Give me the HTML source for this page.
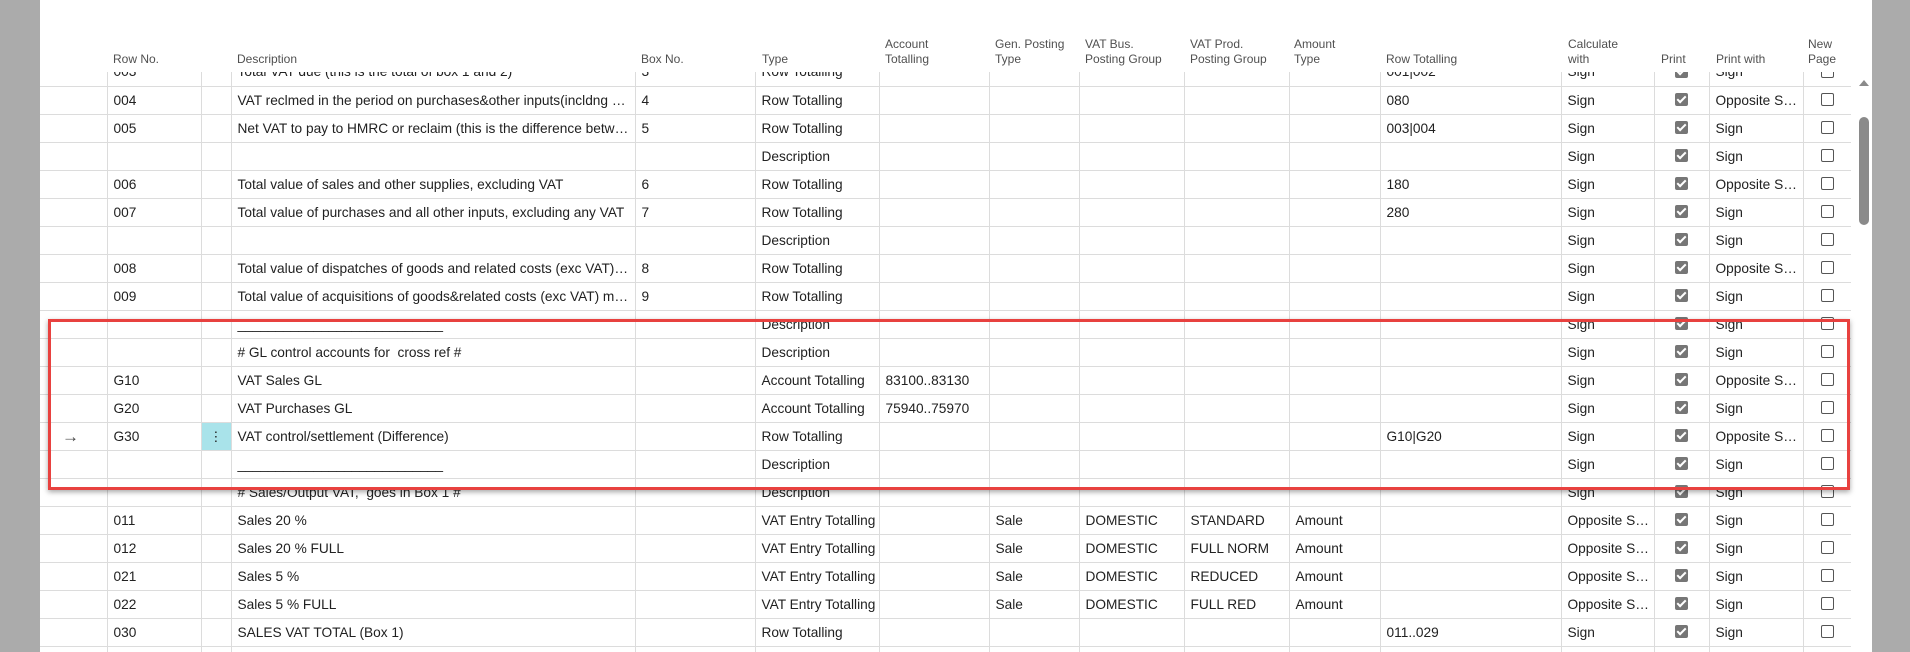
<!DOCTYPE html>
<html><head><meta charset="utf-8"><style>
*{margin:0;padding:0;box-sizing:border-box}
body{width:1910px;height:652px;overflow:hidden;background:#fff;font-family:"Liberation Sans",sans-serif;position:relative}
.gl{position:absolute;left:0;top:0;width:40px;height:652px;background:#ababab}
.gr{position:absolute;left:1872px;top:0;width:38px;height:652px;background:#ababab}
.hdr{position:absolute;top:1px;left:40px;height:72px;width:1832px;font-size:12px;color:#505050;line-height:15px}
.hdr div{position:absolute;white-space:nowrap}
.body{position:absolute;top:72px;left:40px;width:1811px;height:580px;overflow:hidden}
table{border-collapse:collapse;table-layout:fixed;width:1811px;margin-top:-14px;font-size:13.7px;color:#212121}
td{height:28px;border-bottom:1px solid #dcdcdc;border-left:1px solid #dcdcdc;padding:0 3px 0 6px;white-space:nowrap;overflow:hidden;text-overflow:ellipsis;line-height:27px}
td:first-child{border-left:none}
.ck{display:inline-block;width:13px;height:13px;border-radius:2px;background:#767676;vertical-align:middle;position:relative;top:-1px}
.ck:after{content:"";position:absolute;left:4px;top:1px;width:3px;height:7px;border:solid #fff;border-width:0 2px 2px 0;transform:rotate(45deg)}
.un{display:inline-block;width:13px;height:13px;border-radius:2px;border:1px solid #555;vertical-align:middle;position:relative;top:-1px}
.c{text-align:center;padding:0}
.red{position:absolute;left:48px;top:319px;width:1802px;height:171px;border:3px solid #e8413f;box-shadow:0 2px 5px rgba(0,0,0,.35)}
.sb{position:absolute;left:1859px;top:117px;width:10px;height:108px;border-radius:5px;background:#8a8a8a}
.up{position:absolute;left:1859px;top:80px;width:0;height:0;border-left:5px solid transparent;border-right:5px solid transparent;border-bottom:6px solid #8a8a8a}
</style></head><body>
<div class="gl"></div><div class="gr"></div>
<div class="hdr">
<div style="left:73px;top:51px">Row No.</div>
<div style="left:197px;top:51px">Description</div>
<div style="left:601px;top:51px">Box No.</div>
<div style="left:722px;top:51px">Type</div>
<div style="left:845px;top:36px">Account<br>Totalling</div>
<div style="left:955px;top:36px">Gen. Posting<br>Type</div>
<div style="left:1045px;top:36px">VAT Bus.<br>Posting Group</div>
<div style="left:1150px;top:36px">VAT Prod.<br>Posting Group</div>
<div style="left:1254px;top:36px">Amount<br>Type</div>
<div style="left:1346px;top:51px">Row Totalling</div>
<div style="left:1528px;top:36px">Calculate<br>with</div>
<div style="left:1621px;top:51px">Print</div>
<div style="left:1676px;top:51px">Print with</div>
<div style="left:1768px;top:36px">New<br>Page</div>
</div>
<div class="body"><table>
<colgroup><col style="width:67px"><col style="width:94px"><col style="width:30px"><col style="width:404px"><col style="width:120px"><col style="width:124px"><col style="width:110px"><col style="width:90px"><col style="width:105px"><col style="width:105px"><col style="width:91px"><col style="width:181px"><col style="width:93px"><col style="width:55px"><col style="width:94px"><col style="width:48px"></colgroup>
<tr><td></td><td>003</td><td></td><td>Total VAT due (this is the total of box 1 and 2)</td><td>3</td><td>Row Totalling</td><td></td><td></td><td></td><td></td><td></td><td>001|002</td><td>Sign</td><td class="c"><span class="ck"></span></td><td>Sign</td><td class="c"><span class="un"></span></td></tr>
<tr><td></td><td>004</td><td></td><td>VAT reclmed in the period on purchases&amp;other inputs(incldng acquisitions)</td><td>4</td><td>Row Totalling</td><td></td><td></td><td></td><td></td><td></td><td>080</td><td>Sign</td><td class="c"><span class="ck"></span></td><td>Opposite Sign</td><td class="c"><span class="un"></span></td></tr>
<tr><td></td><td>005</td><td></td><td>Net VAT to pay to HMRC or reclaim (this is the difference between)</td><td>5</td><td>Row Totalling</td><td></td><td></td><td></td><td></td><td></td><td>003|004</td><td>Sign</td><td class="c"><span class="ck"></span></td><td>Sign</td><td class="c"><span class="un"></span></td></tr>
<tr><td></td><td></td><td></td><td></td><td></td><td>Description</td><td></td><td></td><td></td><td></td><td></td><td></td><td>Sign</td><td class="c"><span class="ck"></span></td><td>Sign</td><td class="c"><span class="un"></span></td></tr>
<tr><td></td><td>006</td><td></td><td>Total value of sales and other supplies, excluding VAT</td><td>6</td><td>Row Totalling</td><td></td><td></td><td></td><td></td><td></td><td>180</td><td>Sign</td><td class="c"><span class="ck"></span></td><td>Opposite Sign</td><td class="c"><span class="un"></span></td></tr>
<tr><td></td><td>007</td><td></td><td>Total value of purchases and all other inputs, excluding any VAT</td><td>7</td><td>Row Totalling</td><td></td><td></td><td></td><td></td><td></td><td>280</td><td>Sign</td><td class="c"><span class="ck"></span></td><td>Sign</td><td class="c"><span class="un"></span></td></tr>
<tr><td></td><td></td><td></td><td></td><td></td><td>Description</td><td></td><td></td><td></td><td></td><td></td><td></td><td>Sign</td><td class="c"><span class="ck"></span></td><td>Sign</td><td class="c"><span class="un"></span></td></tr>
<tr><td></td><td>008</td><td></td><td>Total value of dispatches of goods and related costs (exc VAT) to EU</td><td>8</td><td>Row Totalling</td><td></td><td></td><td></td><td></td><td></td><td></td><td>Sign</td><td class="c"><span class="ck"></span></td><td>Opposite Sign</td><td class="c"><span class="un"></span></td></tr>
<tr><td></td><td>009</td><td></td><td>Total value of acquisitions of goods&amp;related costs (exc VAT) mmmm</td><td>9</td><td>Row Totalling</td><td></td><td></td><td></td><td></td><td></td><td></td><td>Sign</td><td class="c"><span class="ck"></span></td><td>Sign</td><td class="c"><span class="un"></span></td></tr>
<tr><td></td><td></td><td></td><td>___________________________</td><td></td><td>Description</td><td></td><td></td><td></td><td></td><td></td><td></td><td>Sign</td><td class="c"><span class="ck"></span></td><td>Sign</td><td class="c"><span class="un"></span></td></tr>
<tr><td></td><td></td><td></td><td># GL control accounts for&nbsp; cross ref #</td><td></td><td>Description</td><td></td><td></td><td></td><td></td><td></td><td></td><td>Sign</td><td class="c"><span class="ck"></span></td><td>Sign</td><td class="c"><span class="un"></span></td></tr>
<tr><td></td><td>G10</td><td></td><td>VAT Sales GL</td><td></td><td>Account Totalling</td><td>83100..83130</td><td></td><td></td><td></td><td></td><td></td><td>Sign</td><td class="c"><span class="ck"></span></td><td>Opposite Sign</td><td class="c"><span class="un"></span></td></tr>
<tr><td></td><td>G20</td><td></td><td>VAT Purchases GL</td><td></td><td>Account Totalling</td><td>75940..75970</td><td></td><td></td><td></td><td></td><td></td><td>Sign</td><td class="c"><span class="ck"></span></td><td>Sign</td><td class="c"><span class="un"></span></td></tr>
<tr><td style="padding-left:22px;color:#444;font-size:17px">→</td><td>G30</td><td style="background:#a9e3ea;text-align:center;padding:0">⋮</td><td>VAT control/settlement (Difference)</td><td></td><td>Row Totalling</td><td></td><td></td><td></td><td></td><td></td><td>G10|G20</td><td>Sign</td><td class="c"><span class="ck"></span></td><td>Opposite Sign</td><td class="c"><span class="un"></span></td></tr>
<tr><td></td><td></td><td></td><td>___________________________</td><td></td><td>Description</td><td></td><td></td><td></td><td></td><td></td><td></td><td>Sign</td><td class="c"><span class="ck"></span></td><td>Sign</td><td class="c"><span class="un"></span></td></tr>
<tr><td></td><td></td><td></td><td># Sales/Output VAT,&nbsp; goes in Box 1 #</td><td></td><td>Description</td><td></td><td></td><td></td><td></td><td></td><td></td><td>Sign</td><td class="c"><span class="ck"></span></td><td>Sign</td><td class="c"><span class="un"></span></td></tr>
<tr><td></td><td>011</td><td></td><td>Sales 20 %</td><td></td><td>VAT Entry Totalling</td><td></td><td>Sale</td><td>DOMESTIC</td><td>STANDARD</td><td>Amount</td><td></td><td>Opposite Sign</td><td class="c"><span class="ck"></span></td><td>Sign</td><td class="c"><span class="un"></span></td></tr>
<tr><td></td><td>012</td><td></td><td>Sales 20 % FULL</td><td></td><td>VAT Entry Totalling</td><td></td><td>Sale</td><td>DOMESTIC</td><td>FULL NORM</td><td>Amount</td><td></td><td>Opposite Sign</td><td class="c"><span class="ck"></span></td><td>Sign</td><td class="c"><span class="un"></span></td></tr>
<tr><td></td><td>021</td><td></td><td>Sales 5 %</td><td></td><td>VAT Entry Totalling</td><td></td><td>Sale</td><td>DOMESTIC</td><td>REDUCED</td><td>Amount</td><td></td><td>Opposite Sign</td><td class="c"><span class="ck"></span></td><td>Sign</td><td class="c"><span class="un"></span></td></tr>
<tr><td></td><td>022</td><td></td><td>Sales 5 % FULL</td><td></td><td>VAT Entry Totalling</td><td></td><td>Sale</td><td>DOMESTIC</td><td>FULL RED</td><td>Amount</td><td></td><td>Opposite Sign</td><td class="c"><span class="ck"></span></td><td>Sign</td><td class="c"><span class="un"></span></td></tr>
<tr><td></td><td>030</td><td></td><td>SALES VAT TOTAL (Box 1)</td><td></td><td>Row Totalling</td><td></td><td></td><td></td><td></td><td></td><td>011..029</td><td>Sign</td><td class="c"><span class="ck"></span></td><td>Sign</td><td class="c"><span class="un"></span></td></tr>
<tr><td></td><td>031</td><td></td><td></td><td></td><td></td><td></td><td></td><td></td><td></td><td></td><td></td><td></td><td></td><td></td><td></td></tr>
</table></div>
<div class="red"></div>
<div class="up"></div><div class="sb"></div>
</body></html>
